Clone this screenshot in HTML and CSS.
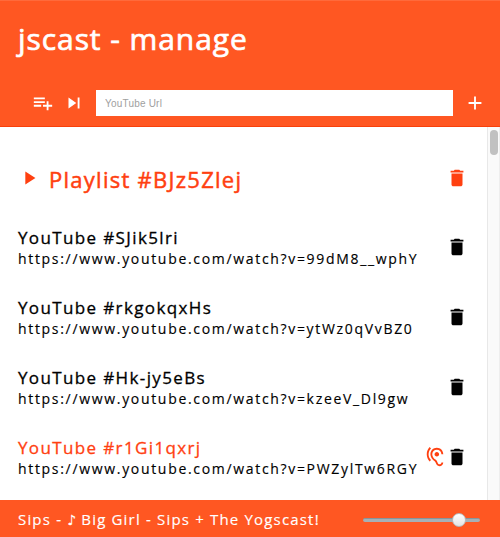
FILE: index.html
```html
<!DOCTYPE html>
<html lang="en">
<head>
<meta charset="utf-8">
<title>jscast - manage</title>
<link rel="stylesheet" href="styles.css">
</head>
<body>
<svg class="sprite" aria-hidden="true">
  <symbol id="add-list" viewBox="0 0 24 24"><path d="M14 10H2v2h12v-2zm0-4H2v2h12V6zm4 8v-4h-2v4h-4v2h4v4h2v-4h4v-2h-4zM2 16h8v-2H2v2z"/></symbol>
  <symbol id="next" viewBox="0 0 24 24"><path d="M6 18l8.500-6L6 6v12zM16 6v12h2V6h-2z"/></symbol>
  <symbol id="add" viewBox="0 0 24 24"><path d="M19 13h-6v6h-2v-6H5v-2h6V5h2v6h6v2z"/></symbol>
  <symbol id="play" viewBox="0 0 24 24"><path d="M8 5v14l11-7z"/></symbol>
  <symbol id="delete" viewBox="0 0 24 24"><path d="M6 19c0 1.100.9 2 2 2h8c1.100 0 2-.9 2-2V7H6v12zM19 4h-3.500l-1-1h-5l-1 1H5v2h14V4z"/></symbol>
  <symbol id="hearing" viewBox="0 0 24 24"><path d="M17 20c-.29 0-.56-.06-.76-.15-.71-.37-1.210-.88-1.710-2.380-.51-1.560-1.470-2.290-2.390-3-.79-.61-1.610-1.240-2.320-2.530C9.290 10.980 9 9.930 9 9c0-2.800 2.200-5 5-5s5 2.200 5 5h2c0-3.930-3.070-7-7-7S7 5.070 7 9c0 1.260.38 2.650 1.070 3.900.91 1.650 1.980 2.480 2.850 3.150.81.62 1.390 1.070 1.710 2.050.6 1.820 1.370 2.840 2.730 3.550.51.23 1.070.35 1.640.35 2.210 0 4-1.790 4-4h-2c0 1.100-.9 2-2 2zM7.640 2.640L6.220 1.220C4.230 3.210 3 5.960 3 9s1.230 5.790 3.220 7.780l1.410-1.410C6.010 13.740 5 11.490 5 9s1.010-4.740 2.640-6.360zM11.500 9c0 1.380 1.120 2.500 2.500 2.500s2.500-1.120 2.500-2.500-1.120-2.500-2.500-2.500-2.500 1.120-2.500 2.500z"/></symbol>
</svg>
<div class="app">
  <header class="header">
    <h1 class="title">jscast - manage</h1>
    <div class="toolbar">
      <svg class="icon"><use href="#add-list"/></svg>
      <svg class="icon icon-next"><use href="#next"/></svg>
      <input class="url-input" type="text" placeholder="YouTube Url">
      <svg class="icon icon-add"><use href="#add"/></svg>
    </div>
  </header>
  <main class="content">
    <div class="list">
      <div class="playlist">
        <svg class="icon"><use href="#play"/></svg>
        <h2 class="playlist-name">Playlist #BJz5Zlej</h2>
        <svg class="icon"><use href="#delete"/></svg>
      </div>
      <div class="item">
        <div class="item-text"><div class="item-name">YouTube #SJik5lri</div><div class="item-url">https://www.youtube.com/watch?v=99dM8__wphY</div></div>
        <svg class="icon"><use href="#delete"/></svg>
      </div>
      <div class="item">
        <div class="item-text"><div class="item-name">YouTube #rkgokqxHs</div><div class="item-url">https://www.youtube.com/watch?v=ytWz0qVvBZ0</div></div>
        <svg class="icon"><use href="#delete"/></svg>
      </div>
      <div class="item">
        <div class="item-text"><div class="item-name">YouTube #Hk-jy5eBs</div><div class="item-url">https://www.youtube.com/watch?v=kzeeV_Dl9gw</div></div>
        <svg class="icon"><use href="#delete"/></svg>
      </div>
      <div class="item">
        <div class="item-text"><div class="item-name active">YouTube #r1Gi1qxrj</div><div class="item-url">https://www.youtube.com/watch?v=PWZylTw6RGY</div></div>
        <svg class="icon active"><use href="#hearing"/></svg>
        <svg class="icon"><use href="#delete"/></svg>
      </div>
    </div>
    <div class="scrollbar"><div class="thumb"></div></div>
  </main>
  <footer class="footer">
    <div class="now-playing">Sips - <span class="note">♪</span> Big Girl - Sips + The Yogscast!</div>
    <div class="slider"><div class="knob"></div></div>
  </footer>
</div>
</body>
</html>
```
FILE: styles.css
```css
* { box-sizing: border-box; }
body { margin: 0; font-family: "Open Sans", sans-serif; background: #fff; color: #000; }
.sprite { display: none; }
.app { width: 500px; height: 537px; display: flex; flex-direction: column; overflow: hidden; }
.icon { width: 22px; height: 22px; flex: none; fill: currentColor; }
.header { height: 127px; background: #ff5722; color: #fff; border-bottom: 1px solid #f8400b; border-top: 1px solid #ff6a3b; }
.title { margin: 18px 0 0 18px; font-size: 30px; line-height: 40px; font-weight: 400; letter-spacing: 0.930px; white-space: nowrap; -webkit-text-stroke: 0.700px; }
.toolbar { display: flex; align-items: center; height: 26px; margin-top: 31px; padding-left: 32px; }
.icon-next { margin-left: 9px; }
.url-input { width: 357px; height: 26px; margin-left: 11px; border: 0; border-radius: 0; padding: 0 9px; background: #fff; font: 10px "Liberation Sans", sans-serif; letter-spacing: 0.200px; }
.url-input::placeholder { color: #a0a0a0; }
.icon-add { margin-left: 11px; }
.content { flex: 1; display: flex; min-height: 0; }
.list { flex: 1; padding: 32px 19px 0 18px; overflow: hidden; }
.playlist { display: flex; align-items: center; height: 40px; color: #ff4010; }
.playlist .icon { margin-bottom: 2px; }
.playlist-name { flex: 1; margin: 0 0 0 9px; font-size: 22px; line-height: 34px; font-weight: 400; letter-spacing: 1.270px; white-space: nowrap; -webkit-text-stroke: 0.500px; }
.item { display: flex; align-items: center; height: 42px; margin-top: 28px; }
.item .icon { margin-bottom: 2px; }
.item-text { flex: 1; min-width: 0; white-space: nowrap; }
.item-name { font-size: 17px; line-height: 22px; letter-spacing: 1.370px; -webkit-text-stroke: 0.300px; }
.item-url { font-size: 14px; line-height: 20px; letter-spacing: 1.680px; -webkit-text-stroke: 0.150px; }
.active { color: #ff4010; }
.scrollbar { width: 13px; padding: 3px 2px 0 2px; background: #fafafa; border-left: 1px solid #e8e8e8; border-right: 1px solid #eee; }
.thumb { width: 8px; height: 25px; border-radius: 4px; background: #c1c1c1; }
.footer { height: 37px; display: flex; align-items: center; justify-content: space-between; padding: 0 20px 0 18px; background: #ff5722; color: #fff; }
.now-playing { font-size: 15px; line-height: 20px; letter-spacing: 1.180px; white-space: nowrap; -webkit-text-stroke: 0.150px; }
.note { display: inline-block; width: 9px; line-height: 14px; font-family: "DejaVu Sans", sans-serif; font-size: 14px; letter-spacing: 0; }
.slider { display: flex; align-items: center; width: 117px; height: 4px; margin-top: 2px; padding-left: 89px; border-radius: 2px; background: #a6b0b5; border-top: 1px solid #87959c; }
.knob { flex: none; width: 14px; height: 14px; margin-top: -1px; border-radius: 50%; background: linear-gradient(#fff, #e4e4e4); border: 1px solid #b4b9bb; }
```
